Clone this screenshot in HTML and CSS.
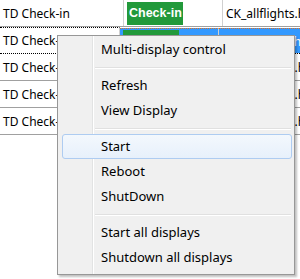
FILE: index.html
```html
<!DOCTYPE html>
<html lang="en">
<head>
    <meta charset="UTF-8">
    <meta name="viewport" content="width=device-width, initial-scale=1.0">
    <title>Displays</title>
    <link rel="stylesheet" href="styles.css">
</head>
<body>
    <div class="grid">
        <div class="row">
            <div class="cell name">TD Check-in</div>
            <div class="cell type"><span class="badge">Check-in</span></div>
            <div class="cell file">CK_allflights.htm</div>
        </div>
        <div class="row selected">
            <div class="cell name">TD Check-in</div>
            <div class="cell type"><span class="badge">Check-in</span></div>
            <div class="cell file">CK_allflights.htm</div>
        </div>
        <div class="row">
            <div class="cell name">TD Check-in</div>
            <div class="cell type"><span class="badge">Check-in</span></div>
            <div class="cell file">CK_allflights.htm</div>
        </div>
        <div class="row">
            <div class="cell name">TD Check-in</div>
            <div class="cell type"><span class="badge">Check-in</span></div>
            <div class="cell file">CK_allflights.htm</div>
        </div>
        <div class="row">
            <div class="cell name">TD Check-in</div>
            <div class="cell type"><span class="badge">Check-in</span></div>
            <div class="cell file">CK_allflights.htm</div>
        </div>
    </div>

    <div class="menu">
        <div class="item">Multi-display control</div>
        <div class="sep"></div>
        <div class="item">Refresh</div>
        <div class="item">View Display</div>
        <div class="sep"></div>
        <div class="item hover">Start</div>
        <div class="item">Reboot</div>
        <div class="item">ShutDown</div>
        <div class="sep"></div>
        <div class="item">Start all displays</div>
        <div class="item">Shutdown all displays</div>
    </div>
</body>
</html>
```

FILE: styles.css
```css
body {
    margin: 0;
    width: 300px;
    height: 279px;
    overflow: hidden;
    background: #ffffff;
    font-family: 'Noto Sans', 'Open Sans', sans-serif;
    font-size: 12px;
    color: #000000;
}
.grid {
    display: flex;
    flex-direction: column;
}
.row {
    display: flex;
    height: 26px;
    border-bottom: 1px solid #a0a0a0;
}
.cell {
    display: flex;
    align-items: center;
    white-space: nowrap;
    overflow: hidden;
    border-right: 1px solid #d0d0d0;
}
.name {
    width: 120px;
    padding-left: 3px;
}
.type {
    width: 95px;
    padding-left: 3px;
}
.file {
    flex: 1;
    padding-left: 3px;
    border-right: none;
}
.badge {
    display: flex;
    align-items: center;
    height: 23px;
    width: 56px;
    padding-left: 2px;
    box-sizing: border-box;
    background: #22993b;
    color: #ffffff;
    font-family: 'Liberation Sans', Arial, sans-serif;
    font-weight: bold;
    font-size: 12.5px;
}
.selected {
    border-bottom: 1px dotted #000000;
}
.selected .name {
    border-top: 1px dotted #000000;
    box-sizing: border-box;
}
.selected .type,
.selected .file {
    background: #3399ff;
    color: #ffffff;
    border-top: 1px dotted #e07020;
    margin-top: 1px;
}
.menu {
    position: absolute;
    left: 57px;
    top: 35px;
    width: 236px;
    height: 237px;
    padding: 1px 0 0 0;
    border: 1px solid #979797;
    background: #f0f0f0;
    box-shadow: 2px 2px 2px rgba(0, 0, 0, 0.25);
    background-image: linear-gradient(to right, transparent 34px, #e2e3e3 34px, #e2e3e3 35px, #ffffff 35px, #ffffff 36px, transparent 36px);
    font-size: 13px;
}
.item {
    height: 25px;
    line-height: 25px;
    padding-left: 41px;
    margin: 0 2px;
    box-sizing: border-box;
}
.item.hover {
    border: 1px solid #aeccf1;
    border-radius: 3px;
    line-height: 23px;
    padding-left: 38px;
    margin: 0 2px 0 4px;
    background: linear-gradient(to bottom, #f3f8fd, #e7f0fb);
}
.sep {
    height: 11px;
    margin-left: 37px;
    margin-right: 3px;
    background: linear-gradient(to bottom, transparent 5px, #e0e0e0 5px, #e0e0e0 6px, #ffffff 6px, #ffffff 7px, transparent 7px);
}
```
